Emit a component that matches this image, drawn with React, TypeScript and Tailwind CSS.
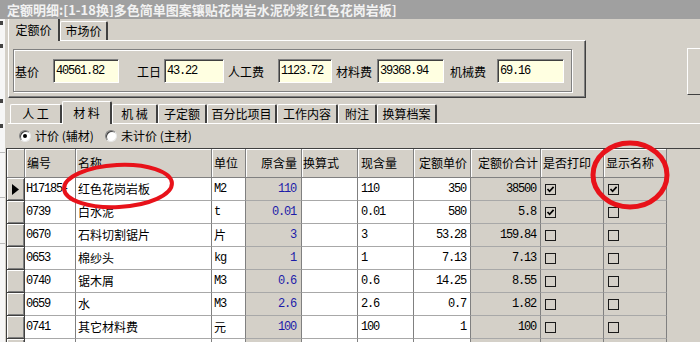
import React from "react"

const num = "font-['Liberation_Mono',monospace] text-[12px] tracking-[-1.2px]"

type Row = {
  code: string
  name: string
  unit: string
  orig: string
  now: string
  price: string
  total: string
  print: boolean
  show: boolean
  cur?: boolean
}

const rows: Row[] = [
  { code: "H17185-", name: "红色花岗岩板", unit: "M2", orig: "110", now: "110", price: "350", total: "38500", print: true, show: true, cur: true },
  { code: "0739", name: "白水泥", unit: "t", orig: "0.01", now: "0.01", price: "580", total: "5.8", print: true, show: false },
  { code: "0670", name: "石料切割锯片", unit: "片", orig: "3", now: "3", price: "53.28", total: "159.84", print: false, show: false },
  { code: "0653", name: "棉纱头", unit: "kg", orig: "1", now: "1", price: "7.13", total: "7.13", print: false, show: false },
  { code: "0740", name: "锯木屑", unit: "M3", orig: "0.6", now: "0.6", price: "14.25", total: "8.55", print: false, show: false },
  { code: "0659", name: "水", unit: "M3", orig: "2.6", now: "2.6", price: "0.7", total: "1.82", print: false, show: false },
  { code: "0741", name: "其它材料费", unit: "元", orig: "100", now: "100", price: "1", total: "100", print: false, show: false },
]

const gridCols = "grid grid-cols-[18px_51px_136px_34px_56px_56px_56px_57px_70px_63px_63px_1fr]"
const cell = "h-[23px] border-r border-b border-r-[#808080] border-b-[#a8a8a8] flex items-center overflow-hidden whitespace-nowrap"
const white = `${cell} bg-white`
const gray = `${cell} bg-[#d4d0c8]`
const head = "h-[29px] bg-[#d4d0c8] border-r border-b border-[#808080] shadow-[inset_1px_1px_0_#fff] flex items-center whitespace-nowrap overflow-hidden"

function Check({ on }: { on: boolean }) {
  return (
    <span className="ml-[4px] w-[11px] h-[11px] border border-[#1a1a1a] flex items-center justify-center">
      {on && (
        <svg width="9" height="9" viewBox="0 0 9 9">
          <path d="M1.5 4 L3.6 6.3 L7.6 1.9" fill="none" stroke="#000" strokeWidth="1.7" />
        </svg>
      )}
    </span>
  )
}

function Tab({ label, w, active }: { label: string; w: string; active?: boolean }) {
  if (active) {
    return (
      <div className={`${w} h-[23px] -mb-px relative z-10 bg-[#d4d0c8] border-l border-t border-white border-r-2 border-r-[#404040] rounded-t-[2px] flex items-center justify-center`}>
        {label}
      </div>
    )
  }
  return (
    <div className={`${w} h-[19px] bg-[#d4d0c8] border-l border-t border-white border-r-2 border-r-[#404040] rounded-t-[2px] flex items-center justify-center`}>
      {label}
    </div>
  )
}

function Field({ label, lw, value, iw, gap }: { label: string; lw: string; value: string; iw: string; gap: string }) {
  return (
    <>
      <span className={`${gap} ${lw} mt-[2px]`}>{label}</span>
      <div className={`${iw} h-[24px] bg-[#ffffe1] border border-t-[#808080] border-l-[#808080] border-b-white border-r-white shadow-[inset_1px_1px_0_#404040] pl-[2px] pt-[2px] leading-[14px]`}>
        <span className={num}>{value}</span>
      </div>
    </>
  )
}

function Radio({ on }: { on: boolean }) {
  return (
    <span className="w-[12px] h-[12px] rounded-full bg-white border border-t-[#808080] border-l-[#808080] border-b-[#e8e8e8] border-r-[#e8e8e8] shadow-[inset_1px_1px_0_#404040] flex items-center justify-center">
      {on && <span className="w-[4px] h-[4px] rounded-full bg-black" />}
    </span>
  )
}

export default function App() {
  return (
    <div className="relative w-[700px] h-[342px] overflow-hidden bg-[#d4d0c8] text-[12px] text-black font-['Noto_Sans_CJK_SC',sans-serif] leading-none">
      <div className="h-[19px] bg-[#a0a0a0] text-[#f2f2f2] font-bold text-[13px] pl-[7px] flex items-center whitespace-nowrap">
        定额明细:[1-18换]多色简单图案镶贴花岗岩水泥砂浆[红色花岗岩板]
      </div>

      <div className="flex h-[323px] overflow-hidden">
        <div className="w-[5px] shrink-0 bg-[#f6f6f6] flex flex-col">
          <div className="mt-[2px] h-[4px] w-[3px] shrink-0 bg-[#444]" />
          <div className="mt-[19px] h-[4px] w-[3px] shrink-0 bg-[#444]" />
          <div className="mt-[51px] h-[4px] w-[3px] shrink-0 bg-[#444]" />
          <div className="mt-[21px] h-[4px] w-[3px] shrink-0 bg-[#444]" />
          <div className="mt-[24px] h-px w-[5px] shrink-0 bg-[#bbb]" />
          <div className="mt-[44px] h-px w-[5px] shrink-0 bg-[#bbb]" />
          <div className="mt-[45px] h-px w-[5px] shrink-0 bg-[#bbb]" />
        </div>

        <div className="flex-1 min-w-0">
          <div className="h-[21px] flex items-end pl-[3px]">
            <Tab label="定额价" w="w-[52px]" active />
            <Tab label="市场价" w="w-[48px]" />
          </div>

          <div className="flex h-[58px]">
            <div className="ml-[3px] w-[578px] h-[58px] border border-t-white border-l-white border-r-[#404040] border-b-[#404040] shadow-[inset_-1px_-1px_0_#808080]">
              <div className="ml-[4px] mt-[8px] w-[559px] h-[43px] border border-[#808080] shadow-[inset_1px_1px_0_#fff,1px_1px_0_#fff] flex items-center pl-[1px]">
                <Field label="基价" lw="w-[38px]" value="40561.82" iw="w-[66px]" gap="ml-0" />
                <Field label="工日" lw="w-[27px]" value="43.22" iw="w-[60px]" gap="ml-[18px]" />
                <Field label="人工费" lw="w-[50px]" value="1123.72" iw="w-[54px]" gap="ml-[4px]" />
                <Field label="材料费" lw="w-[41px]" value="39368.94" iw="w-[67px]" gap="ml-[4px]" />
                <Field label="机械费" lw="w-[47px]" value="69.16" iw="w-[67px]" gap="ml-[6px]" />
              </div>
            </div>
            <div className="ml-auto mt-[8px] w-[13px] h-[47px] border-l border-t border-white border-b border-b-[#404040]" />
          </div>

          <div className="h-[25px] flex items-end pl-[5px]">
            <Tab label="人 工" w="w-[52px]" />
            <Tab label="材 料" w="w-[50px]" active />
            <Tab label="机 械" w="w-[46px]" />
            <Tab label="子定额" w="w-[49px]" />
            <Tab label="百分比项目" w="w-[70px]" />
            <Tab label="工作内容" w="w-[61px]" />
            <Tab label="附注" w="w-[39px]" />
            <Tab label="换算档案" w="w-[60px]" />
          </div>
          <div className="ml-[3px] border-t border-white" />

          <div className="h-[24px] flex items-center">
            <div className="ml-[14px] w-[86px] flex items-center">
              <Radio on />
              <span className="ml-[4px]">计价 (辅材)</span>
            </div>
            <Radio on={false} />
            <span className="ml-[4px]">未计价 (主材)</span>
          </div>

          <div className="ml-[1px] border-t border-l border-[#404040]">
            <div className={gridCols}>
              <div className={head} />
              <div className={`${head} pl-[2px]`}>编号</div>
              <div className={`${head} pl-[2px]`}>名称</div>
              <div className={`${head} pl-[2px]`}>单位</div>
              <div className={`${head} justify-end pr-[4px]`}>原含量</div>
              <div className={`${head} pl-[1px]`}>换算式</div>
              <div className={`${head} pl-[3px]`}>现含量</div>
              <div className={`${head} justify-end pr-[3px]`}>定额单价</div>
              <div className={`${head} justify-end pr-[2px]`}>定额价合计</div>
              <div className={`${head} pl-[2px]`}>是否打印</div>
              <div className={`${head} pl-[2px]`}>显示名称</div>
              <div className="h-[29px]" />

              {rows.map((r) => (
                <React.Fragment key={r.code}>
                  <div className="h-[23px] bg-[#d4d0c8] border-r border-b border-[#404040] shadow-[inset_1px_1px_0_#fff,inset_-1px_-1px_0_#808080] flex items-center justify-center">
                    {r.cur && (
                      <svg width="7" height="11" viewBox="0 0 7 11">
                        <polygon points="0,0 7,5.5 0,11" fill="#000" />
                      </svg>
                    )}
                  </div>
                  <div className={`${white} pl-[1px]`}>
                    <span className={num}>{r.code}</span>
                  </div>
                  <div className={`${white} pl-[2px]`}>{r.name}</div>
                  <div className={`${white} pl-[2px]`}>
                    {/^[A-Za-z0-9]+$/.test(r.unit) ? <span className={num}>{r.unit}</span> : r.unit}
                  </div>
                  <div className={`${gray} justify-end pr-[5px] text-[#1c1ca8]`}>
                    <span className={num}>{r.orig}</span>
                  </div>
                  <div className={white} />
                  <div className={`${white} pl-[3px]`}>
                    <span className={num}>{r.now}</span>
                  </div>
                  <div className={`${white} justify-end pr-[4px]`}>
                    <span className={num}>{r.price}</span>
                  </div>
                  <div className={`${gray} justify-end pr-[4px]`}>
                    <span className={num}>{r.total}</span>
                  </div>
                  <div className={gray}>
                    <Check on={r.print} />
                  </div>
                  <div className={gray}>
                    <Check on={r.show} />
                  </div>
                  <div className="h-[23px]" />
                </React.Fragment>
              ))}

              <div className="h-[23px] bg-[#d4d0c8] border-r border-b border-[#404040] shadow-[inset_1px_1px_0_#fff,inset_-1px_-1px_0_#808080]" />
              <div className={white} />
              <div className={white} />
              <div className={white} />
              <div className={gray} />
              <div className={white} />
              <div className={white} />
              <div className={white} />
              <div className={gray} />
              <div className={gray} />
              <div className={gray} />
              <div className="h-[23px]" />
            </div>
          </div>
        </div>
      </div>

      <svg className="absolute left-0 top-0 pointer-events-none" width="700" height="342" viewBox="0 0 700 342">
        <ellipse cx="118" cy="186" rx="54" ry="21" fill="none" stroke="#e8121a" strokeWidth="4" transform="rotate(-3 118 186)" />
        <ellipse cx="630" cy="175" rx="37" ry="32" fill="none" stroke="#e8121a" strokeWidth="5" />
      </svg>
    </div>
  )
}
